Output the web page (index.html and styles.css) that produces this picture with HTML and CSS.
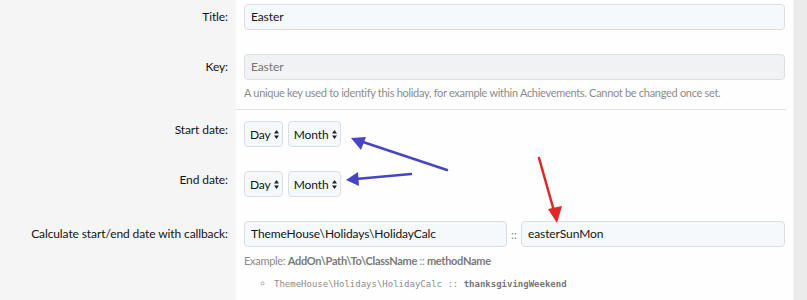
FILE: index.html
```
<!DOCTYPE html>
<html lang="en">
<head>
    <meta charset="UTF-8">
    <title>Holiday</title>
    <link rel="stylesheet" href="styles.css">
</head>
<body>
    <div class="page">
        <div class="form">
            <div class="row row-first">
                <div class="label label-input">Title:</div>
                <div class="field">
                    <div class="input">Easter</div>
                </div>
            </div>
            <div class="row">
                <div class="label label-input">Key:</div>
                <div class="field">
                    <div class="input input-disabled">Easter</div>
                    <div class="hint">A unique key used to identify this holiday, for example within Achievements. Cannot be changed once set.</div>
                </div>
            </div>
            <div class="row row-sep">
                <div class="label">Start date:</div>
                <div class="field field-sep">
                    <div class="selects">
                        <div class="select">Day <svg class="caret" width="5" height="9" viewBox="0 0 5 9"><path d="M2.5 0L5 3.6H0Z M2.5 9L5 5.4H0Z"/></svg></div>
                        <div class="select">Month <svg class="caret" width="5" height="9" viewBox="0 0 5 9"><path d="M2.5 0L5 3.6H0Z M2.5 9L5 5.4H0Z"/></svg></div>
                    </div>
                </div>
            </div>
            <div class="row">
                <div class="label">End date:</div>
                <div class="field">
                    <div class="selects">
                        <div class="select">Day <svg class="caret" width="5" height="9" viewBox="0 0 5 9"><path d="M2.5 0L5 3.6H0Z M2.5 9L5 5.4H0Z"/></svg></div>
                        <div class="select">Month <svg class="caret" width="5" height="9" viewBox="0 0 5 9"><path d="M2.5 0L5 3.6H0Z M2.5 9L5 5.4H0Z"/></svg></div>
                    </div>
                </div>
            </div>
            <div class="row row-last">
                <div class="label label-input">Calculate start/end date with callback:</div>
                <div class="field">
                    <div class="callback">
                        <div class="input">ThemeHouse\Holidays\HolidayCalc</div>
                        <span class="sep">::</span>
                        <div class="input">easterSunMon</div>
                    </div>
                    <div class="hint hint-example">Example: <b>AddOn\Path\To\ClassName</b> :: <b>methodName</b></div>
                    <ul class="codes">
                        <li><code>ThemeHouse\Holidays\HolidayCalc :: <b>thanksgivingWeekend</b></code></li>
                    </ul>
                </div>
            </div>
        </div>
        <div class="scroll"></div>
    </div>

    <svg class="marks" width="807" height="300" viewBox="0 0 807 300">
        <g stroke-linecap="round" stroke-width="2.5">
            <line x1="447" y1="170" x2="360" y2="141" stroke="#4646c4"/>
            <line x1="411" y1="174" x2="356" y2="179" stroke="#4646c4"/>
            <line x1="539" y1="158" x2="554" y2="211" stroke="#e02626"/>
        </g>
        <polygon points="351,138 366,137 361,150" fill="#4646c4"/>
        <polygon points="346,180 358,172 359,186" fill="#4646c4"/>
        <polygon points="557,223 548,209 562,206" fill="#e02626"/>
    </svg>
</body>
</html>
```

FILE: styles.css
```
html, body {
    margin: 0;
    padding: 0;
}
body {
    width: 807px;
    height: 300px;
    overflow: hidden;
    position: relative;
    font-family: Lato, "Noto Sans", sans-serif;
    font-size: 12px;
    letter-spacing: -0.1px;
    color: #141414;
    background: #f5f5f5;
}
.page {
    display: flex;
    height: 300px;
}
.form {
    flex: 1;
    min-width: 0;
    display: flex;
    flex-direction: column;
}
.row {
    display: flex;
}
.row-last {
    flex: 1;
}
.label {
    width: 228px;
    padding: 12px 8px 0 0;
    text-align: right;
    line-height: 18px;
    white-space: nowrap;
    background: #f5f5f5;
    flex-shrink: 0;
}
.label-input {
    padding-top: 16px;
}
.row-first .label {
    padding-top: 8px;
}
.row-sep .label {
    padding-top: 11px;
}
.field {
    flex: 1;
    min-width: 0;
    background: #fefefe;
    padding: 12px 8px 12px 8px;
}
.row-first .field {
    padding-top: 4px;
}
.row-sep .field {
    padding-top: 11px;
    position: relative;
}
.row-sep .field::before {
    content: '';
    position: absolute;
    top: -1px;
    left: 0;
    right: 7px;
    height: 1px;
    background: #e2e2e2;
}
.row:nth-child(2) .field {
    padding-bottom: 10px;
}
.input {
    height: 24px;
    line-height: 24px;
    padding: 0 6px;
    border: 1px solid #dcdfe2;
    border-radius: 4px;
    background: #f5f9fc;
    white-space: nowrap;
}
.input-disabled {
    background: #f1f2f3;
    color: #777;
}
.hint {
    margin-top: 6px;
    font-size: 11px;
    letter-spacing: -0.3px;
    line-height: 14px;
    color: #8c8c8c;
    white-space: nowrap;
}
.hint-example {
    margin-top: 7px;
}
.hint b {
    color: #7a7a7a;
}
.selects {
    display: flex;
    gap: 5px;
}
.select {
    display: flex;
    align-items: center;
    gap: 3px;
    height: 24px;
    padding: 0 3px 0 5px;
    border: 1px solid #dcdfe2;
    border-radius: 4px;
    background: #f5f9fc;
}
.caret {
    fill: #222;
}
.callback {
    display: flex;
    align-items: center;
}
.callback .input {
    flex: 1;
}
.callback .input:first-child {
    flex: 0 0 249px;
}
.sep {
    width: 14px;
    text-align: center;
    color: #888;
}
.codes {
    margin: 9px 0 0;
    padding-left: 30px;
    list-style: circle;
    color: #aaa;
    font-size: 9px;
    line-height: 14px;
}
.codes code {
    font-family: "DejaVu Sans Mono", monospace;
    font-size: 9px;
    letter-spacing: 0;
    color: #8c8c8c;
}
.codes b {
    color: #777;
}
.scroll {
    width: 13px;
    flex-shrink: 0;
    background: #ebebeb;
    border-left: 1px solid #f3f3f3;
}
.marks {
    position: absolute;
    top: 0;
    left: 0;
    pointer-events: none;
}
```
